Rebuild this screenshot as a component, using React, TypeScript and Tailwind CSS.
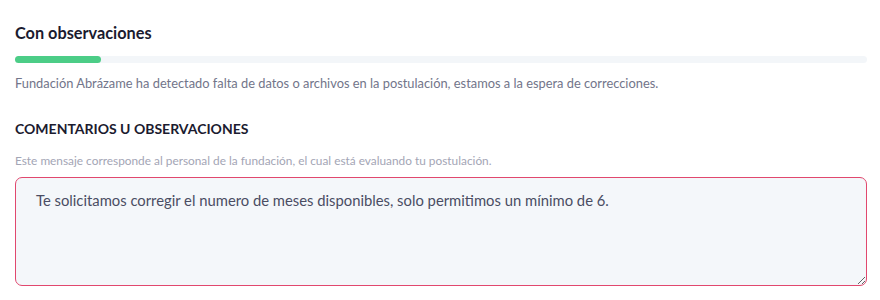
import React from "react";

export default function App() {
  return (
    <div className="w-[880px] h-[300px] bg-white pl-[15px] pr-[13px] pt-[22px]" style={{ fontFamily: "Lato, 'Open Sans', sans-serif" }}>
      <h2 className="text-[16.3px] font-bold text-[#1b1b2f] leading-[22px]">Con observaciones</h2>
      <div className="mt-[12px] h-[7px] w-full rounded-full bg-[#f3f6f9]">
        <div className="h-full w-[86px] rounded-full bg-[#4ccd87]" />
      </div>
      <p className="mt-[11px] text-[12.85px] leading-[18px] text-[#72758a]">
        Fundación Abrázame ha detectado falta de datos o archivos en la postulación, estamos a la espera de correcciones.
      </p>
      <h3 className="mt-[27px] text-[14px] font-bold leading-[20px] text-[#1b1b2f]">COMENTARIOS U OBSERVACIONES</h3>
      <p className="mt-[14px] text-[11.85px] leading-[16px] text-[#a3a5b5]">
        Este mensaje corresponde al personal de la fundación, el cual está evaluando tu postulación.
      </p>
      <textarea
        className="mt-[8px] block h-[109px] w-full rounded-[7px] border border-[#e1486e] bg-[#f4f7fa] px-[20px] pt-[11px] pb-[12px] text-[14.8px] leading-[22px] text-[#4a4d63] outline-none"
        style={{ fontFamily: "Lato, 'Open Sans', sans-serif" }}
        defaultValue="Te solicitamos corregir el numero de meses disponibles, solo permitimos un mínimo de 6."
      />
    </div>
  );
}
